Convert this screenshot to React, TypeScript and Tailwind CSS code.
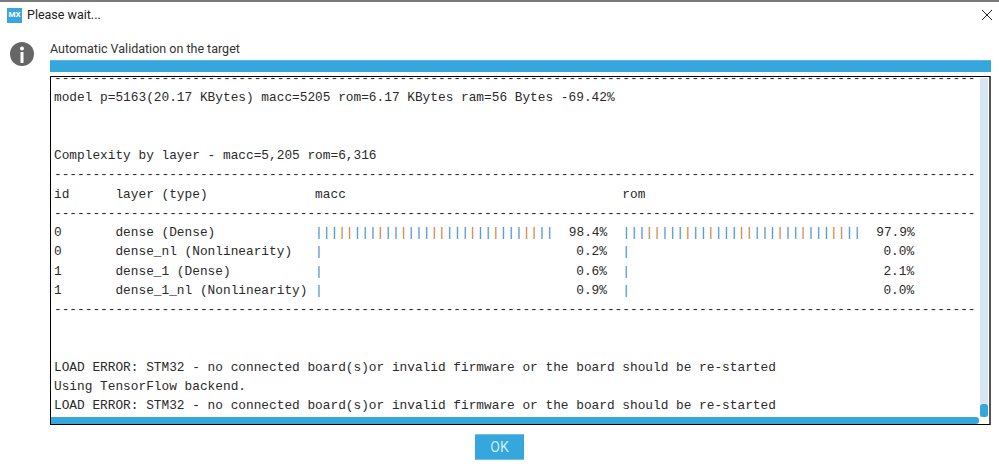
import React from 'react';

const DASHES = '-'.repeat(120);

// the reference's pipes come out blue or orange from subpixel rendering
const BAR_COLORS = 'bbboobbbobbobbboobbbobbobbboobb';

function Bar({ count }: { count: number }) {
	return (
		<>
			{Array.from({ length: count }, (_, i) => (
				<span key={i} className={BAR_COLORS[i] === 'o' ? 'text-[#c9792c]' : 'text-[#2f86cf]'}>|</span>
			))}
		</>
	);
}

function Row({ id, layer, macc, maccPct, rom, romPct }: { id: string; layer: string; macc: number; maccPct: string; rom: number; romPct: string }) {
	const maccPad = 38 - macc - maccPct.length;
	const romPad = 38 - rom - romPct.length;
	return (
		<div>
			{id.padEnd(8) + layer.padEnd(26)}
			<Bar count={macc} />
			{' '.repeat(maccPad) + maccPct + '  '}
			<Bar count={rom} />
			{' '.repeat(romPad) + romPct}
		</div>
	);
}

export default function App() {
	return (
		<div className="w-[999px] h-[472px] bg-white border-t-2 border-[#7a7a7a] overflow-hidden flex flex-col font-['Roboto',sans-serif] text-[#222]">
			<div className="flex items-center pl-[7px] pr-[7px] h-[26px] shrink-0">
				<div className="w-[15px] h-[15px] bg-[#3aa7dc] text-white text-[8px] font-bold flex items-center justify-center leading-none">MX</div>
				<span className="ml-[5px] text-[12.5px]">Please wait...</span>
				<svg className="ml-auto" width="10" height="10" viewBox="0 0 10 10" stroke="#222" strokeWidth="1">
					<path d="M0 0L10 10M10 0L0 10" />
				</svg>
			</div>

			<div className="flex flex-1 min-h-0 pl-[10px] pr-[8px]">
				<svg className="mt-[14px] shrink-0" width="24" height="24" viewBox="0 0 24 24">
					<circle cx="12" cy="12" r="12" fill="#666" />
					<circle cx="12" cy="6.5" r="2" fill="#fff" />
					<rect x="10.5" y="10" width="3" height="11" fill="#fff" />
				</svg>

				<div className="ml-[16px] flex-1 min-w-0 flex flex-col">
					<div className="text-[12.5px] h-[32px] pt-[12px] leading-[17px] text-[#333]">Automatic Validation on the target</div>
					<div className="h-[12px] bg-[#35a7dc] border-t border-[#5cb6e2] shrink-0" />

					<div className="mt-[4px] h-[349px] border border-black border-r-[#555] border-r-2 flex flex-col">
						<div className="flex flex-1 min-h-0">
							<div className="flex-1 min-w-0 overflow-hidden pl-[3px] font-['Liberation_Mono',monospace] text-[12.8px] leading-[19.25px] whitespace-pre text-[#2a2a2a] -mt-[8px]">
								<div>{DASHES}</div>
								<div>model p=5163(20.17 KBytes) macc=5205 rom=6.17 KBytes ram=56 Bytes -69.42%</div>
								<div>{' '}</div>
								<div>{' '}</div>
								<div>Complexity by layer - macc=5,205 rom=6,316</div>
								<div>{DASHES}</div>
								<div>{'id'.padEnd(8) + 'layer (type)'.padEnd(26) + 'macc'.padEnd(40) + 'rom'}</div>
								<div>{DASHES}</div>
								<Row id="0" layer="dense (Dense)" macc={31} maccPct="98.4%" rom={31} romPct="97.9%" />
								<Row id="0" layer="dense_nl (Nonlinearity)" macc={1} maccPct="0.2%" rom={1} romPct="0.0%" />
								<Row id="1" layer="dense_1 (Dense)" macc={1} maccPct="0.6%" rom={1} romPct="2.1%" />
								<Row id="1" layer="dense_1_nl (Nonlinearity)" macc={1} maccPct="0.9%" rom={1} romPct="0.0%" />
								<div>{DASHES}</div>
								<div>{' '}</div>
								<div>{' '}</div>
								<div>LOAD ERROR: STM32 - no connected board(s)or invalid firmware or the board should be re-started</div>
								<div>Using TensorFlow backend.</div>
								<div>LOAD ERROR: STM32 - no connected board(s)or invalid firmware or the board should be re-started</div>
							</div>
							<div className="w-[8px] mr-[1px] mt-[1px] bg-[#d6e6f4] flex flex-col justify-end shrink-0">
								<div className="h-[13px] bg-[#35a7dc] rounded-[3px]" />
							</div>
						</div>
						<div className="h-[7px] mr-[10px] bg-[#35a7dc] rounded-r-[3px] shrink-0" />
					</div>

					<div className="flex justify-center mt-[9px] pr-[42px]">
						<button className="w-[49px] h-[26px] bg-[#35a7dc] text-[#cfeaf8] text-[14px] leading-none border-y border-[#6fc0e6]">OK</button>
					</div>
				</div>
			</div>
		</div>
	);
}
